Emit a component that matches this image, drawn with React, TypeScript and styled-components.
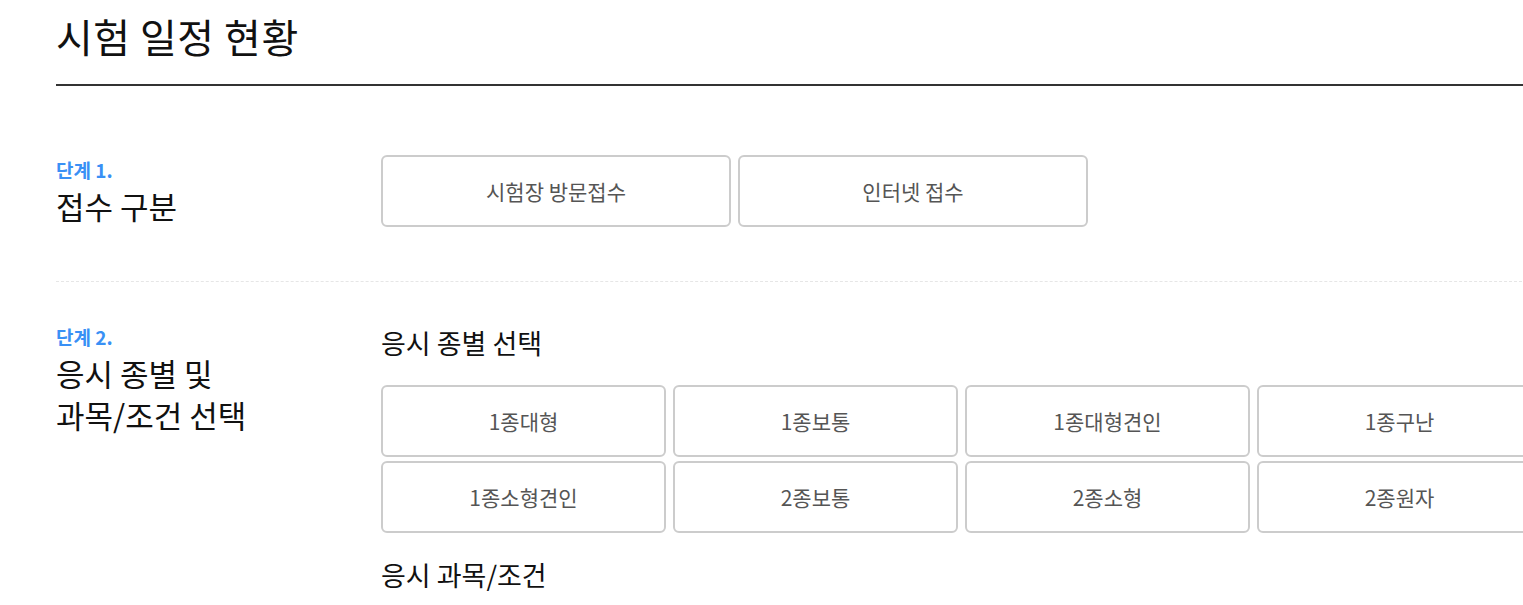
import styled, { createGlobalStyle } from 'styled-components';

const GlobalStyle = createGlobalStyle`
  body {
    margin: 0;
    background: #fff;
    font-family: 'Noto Sans CJK KR', 'Noto Sans', sans-serif;
    overflow: hidden;
  }
`;

const Page = styled.div`
  padding: 0 0 0 56px;
  width: 1486px;
`;

const Header = styled.div`
  border-bottom: 2px solid #333;
  padding: 8px 0 20px;
`;

const Title = styled.h1`
  margin: 0;
  font-size: 40px;
  line-height: 56px;
  font-weight: 400;
  color: #111;
  letter-spacing: 0.5px;
`;

const Step = styled.section<{ $dashed?: boolean; $top: number }>`
  display: grid;
  grid-template-columns: 325px 1161px;
  padding: ${(p) => p.$top}px 0 54px;
  border-bottom: ${(p) => (p.$dashed ? '1px dashed #e6e6e6' : 'none')};
`;

const StepHead = styled.div`
  display: flex;
  flex-direction: column;
  padding-top: 3px;
`;

const StepNo = styled.span`
  font-size: 19px;
  line-height: 24px;
  font-weight: 700;
  color: #3990f5;
`;

const StepName = styled.h2`
  margin: 3px 0 0;
  font-size: 31px;
  line-height: 42px;
  font-weight: 400;
  color: #111;
`;

const Body = styled.div<{ $pad?: number }>`
  display: flex;
  flex-direction: column;
  padding-top: ${(p) => p.$pad ?? 0}px;
`;

const SubTitle = styled.h3`
  margin: 0 0 24px;
  font-size: 27px;
  line-height: 36px;
  font-weight: 400;
  color: #111;
`;

const ButtonGrid = styled.div<{ $cols: number; $width: number; $last?: boolean }>`
  display: grid;
  grid-template-columns: repeat(${(p) => p.$cols}, ${(p) => p.$width}px);
  column-gap: 7px;
  row-gap: 4px;
  margin-bottom: ${(p) => (p.$last ? 0 : 24)}px;
`;

const Choice = styled.button`
  height: 72px;
  border: 2px solid #cccccc;
  border-radius: 6px;
  background: #fff;
  font-family: 'Noto Sans CJK KR', 'Noto Sans', sans-serif;
  font-size: 21px;
  color: #555;
  cursor: pointer;
  padding: 0;
`;

const receipt = ['시험장 방문접수', '인터넷 접수'];
const licenses = [
  '1종대형',
  '1종보통',
  '1종대형견인',
  '1종구난',
  '1종소형견인',
  '2종보통',
  '2종소형',
  '2종원자',
];

export default function App() {
  return (
    <>
      <GlobalStyle />
      <Page>
        <Header>
          <Title>시험 일정 현황</Title>
        </Header>
        <Step $dashed $top={69}>
          <StepHead>
            <StepNo>단계 1.</StepNo>
            <StepName>접수 구분</StepName>
          </StepHead>
          <Body>
            <ButtonGrid $cols={2} $width={350} $last>
              {receipt.map((r) => (
                <Choice key={r}>{r}</Choice>
              ))}
            </ButtonGrid>
          </Body>
        </Step>
        <Step $top={40}>
          <StepHead>
            <StepNo>단계 2.</StepNo>
            <StepName>
              응시 종별 및
              <br />
              과목/조건 선택
            </StepName>
          </StepHead>
          <Body $pad={3}>
            <SubTitle>응시 종별 선택</SubTitle>
            <ButtonGrid $cols={4} $width={285}>
              {licenses.map((l) => (
                <Choice key={l}>{l}</Choice>
              ))}
            </ButtonGrid>
            <SubTitle>응시 과목/조건</SubTitle>
          </Body>
        </Step>
      </Page>
    </>
  );
}
